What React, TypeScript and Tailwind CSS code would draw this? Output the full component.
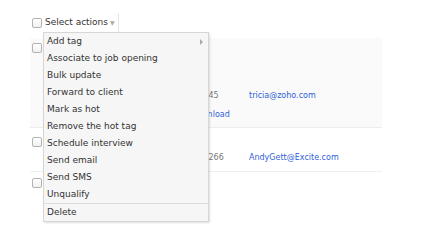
const actions = [
  "Add tag",
  "Associate to job opening",
  "Bulk update",
  "Forward to client",
  "Mark as hot",
  "Remove the hot tag",
  "Schedule interview",
  "Send email",
  "Send SMS",
  "Unqualify",
];

function Checkbox() {
  return (
    <div className="w-[10px] h-[10px] rounded-[2px] border border-[#b3b3b3] bg-gradient-to-b from-white to-[#f0f0f0] shrink-0" />
  );
}

function ActionsMenu() {
  return (
    <div className="absolute left-0 top-full w-[166px] bg-[#f6f6f6] border border-[#d6d6d6] shadow-[1px_1px_2px_rgba(0,0,0,0.12)] z-10">
      {actions.map((a, i) => (
        <div key={a} className="h-[17px] flex items-center justify-between pl-[3px] pr-[5px] text-[#333]">
          <span>{a}</span>
          {i === 0 && (
            <span className="w-0 h-0 border-y-[3px] border-y-transparent border-l-[3px] border-l-[#aaa]" />
          )}
        </div>
      ))}
      <div className="h-[18px] flex items-center pl-[3px] border-t border-[#dcdcdc] text-[#333]">
        Delete
      </div>
    </div>
  );
}

export default function App() {
  return (
    <div
      className="w-[440px] h-[240px] bg-white overflow-hidden text-[9px] leading-none"
      style={{ fontFamily: '"DejaVu Sans", Verdana, sans-serif' }}
    >
      <div className="ml-[30px] pt-[13px] w-[352px]">
        <div className="flex items-center h-[19px] pl-[2px] gap-[1px]">
          <Checkbox />
          <div className="relative h-full">
            <div className="flex items-center h-full pl-[2px] pr-[3px] border-r border-[#e6e6e6] text-[#333]">
              Select actions
              <span className="ml-[2px] text-[6px] text-[#aaa]">▼</span>
            </div>
            <ActionsMenu />
          </div>
        </div>

        <div className="mt-[6px] h-[90px] bg-[#fafafa] border-b border-[#ededed] flex text-[8px]">
          <div className="pl-[2px] pt-[5px] w-[132px]">
            <Checkbox />
          </div>
          <div className="pt-[54px] w-[87px] flex flex-col gap-[11px] whitespace-nowrap">
            <span className="text-[#777]">555-555-0145</span>
            <span className="pl-[28px] text-[#2f5fd8]">Download</span>
          </div>
          <div className="pt-[54px] text-[#2f5fd8]">tricia@zoho.com</div>
        </div>

        <div className="h-[44px] border-b border-[#efefef] flex items-center text-[8px]">
          <div className="pl-[2px] w-[132px] self-start pt-[9px]">
            <Checkbox />
          </div>
          <div className="w-[87px] whitespace-nowrap text-[#777] pt-[17px]">555-5555-1266</div>
          <div className="text-[#2f5fd8] pt-[17px]">AndyGett@Excite.com</div>
        </div>

        <div className="h-[40px] flex">
          <div className="pl-[2px] pt-[6px]">
            <Checkbox />
          </div>
        </div>
      </div>
    </div>
  );
}
